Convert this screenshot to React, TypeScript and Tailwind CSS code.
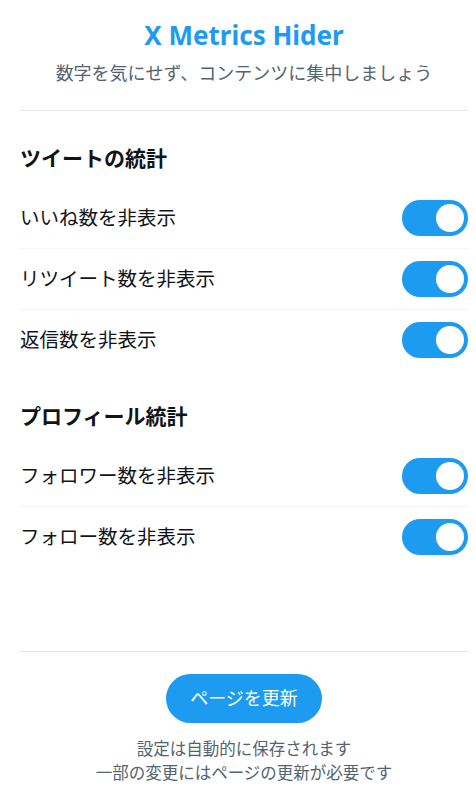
import React, { useState } from "react";

const font = { fontFamily: '"Noto Sans", "Noto Sans CJK JP", sans-serif' };

function Toggle({ on, onClick }: { on: boolean; onClick: () => void }) {
  return (
    <button
      onClick={onClick}
      className={`relative w-[66px] h-[36px] rounded-full shrink-0 ${on ? "bg-[#1d9bf0]" : "bg-[#cfd9de]"}`}
    >
      <span
        className={`absolute top-[4px] w-[28px] h-[28px] rounded-full bg-white ${on ? "right-[4px]" : "left-[4px]"}`}
      />
    </button>
  );
}

function Row({ label, last }: { label: string; last?: boolean }) {
  const [on, setOn] = useState(true);
  return (
    <div className={`flex items-center justify-between py-3 ${last ? "" : "border-b border-[#f2f4f5]"}`}>
      <span className="text-[19.5px] leading-[28px] text-[#0f1419]">{label}</span>
      <Toggle on={on} onClick={() => setOn(!on)} />
    </div>
  );
}

export default function App() {
  return (
    <div className="w-[488px] bg-white px-5 pt-5 pb-1" style={font}>
      <div className="text-center pb-[23px] border-b border-[#e6e9eb]">
        <h1 className="text-[26px] leading-[30px] font-bold text-[#1d9bf0]">X Metrics Hider</h1>
        <p className="mt-[10px] text-[18px] leading-[27px] text-[#536471]">
          数字を気にせず、コンテンツに集中しましょう
        </p>
      </div>

      <section className="mt-[33px]">
        <h2 className="text-[21px] leading-[28px] font-bold text-[#0f1419] mb-4">ツイートの統計</h2>
        <Row label="いいね数を非表示" />
        <Row label="リツイート数を非表示" />
        <Row label="返信数を非表示" last />
      </section>

      <section className="mt-8">
        <h2 className="text-[21px] leading-[28px] font-bold text-[#0f1419] mb-4">プロフィール統計</h2>
        <Row label="フォロワー数を非表示" />
        <Row label="フォロー数を非表示" last />
      </section>

      <div className="mt-[84px] border-t border-[#e6e9eb] pt-[22px] flex flex-col items-center">
        <button className="w-[156px] h-[49px] rounded-full bg-[#1d9bf0] text-white text-[18px]">
          ページを更新
        </button>
        <div className="mt-[14px] text-center text-[16.5px] leading-[24px] text-[#536471]">
          <p>設定は自動的に保存されます</p>
          <p>一部の変更にはページの更新が必要です</p>
        </div>
      </div>
    </div>
  );
}
